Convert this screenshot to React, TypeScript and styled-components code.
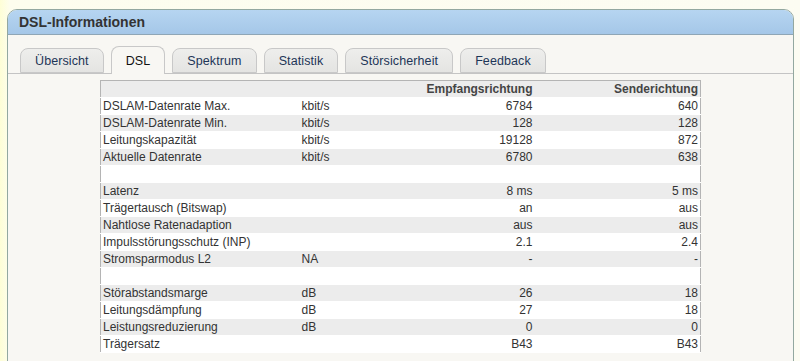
import styled, { createGlobalStyle } from "styled-components";

const GlobalStyle = createGlobalStyle`
  html, body {
    margin: 0;
    padding: 0;
    background: linear-gradient(to right, #fefed6 0px, #fdfdee 10px, #fcfcf2 100%);
    font-family: "Liberation Sans", Arial, sans-serif;
  }
`;

type Row = { label: string; unit?: string; down?: string; up?: string };

const rows: (Row | null)[] = [
  { label: "DSLAM-Datenrate Max.", unit: "kbit/s", down: "6784", up: "640" },
  { label: "DSLAM-Datenrate Min.", unit: "kbit/s", down: "128", up: "128" },
  { label: "Leitungskapazität", unit: "kbit/s", down: "19128", up: "872" },
  { label: "Aktuelle Datenrate", unit: "kbit/s", down: "6780", up: "638" },
  null,
  { label: "Latenz", down: "8 ms", up: "5 ms" },
  { label: "Trägertausch (Bitswap)", down: "an", up: "aus" },
  { label: "Nahtlose Ratenadaption", down: "aus", up: "aus" },
  { label: "Impulsstörungsschutz (INP)", down: "2.1", up: "2.4" },
  { label: "Stromsparmodus L2", unit: "NA", down: "-", up: "-" },
  null,
  { label: "Störabstandsmarge", unit: "dB", down: "26", up: "18" },
  { label: "Leitungsdämpfung", unit: "dB", down: "27", up: "18" },
  { label: "Leistungsreduzierung", unit: "dB", down: "0", up: "0" },
  { label: "Trägersatz", down: "B43", up: "B43" },
];

const tabs = ["Übersicht", "DSL", "Spektrum", "Statistik", "Störsicherheit", "Feedback"];

const Page = styled.div`
  padding: 9px 6px 0 7px;
  height: 361px;
  box-sizing: border-box;
  overflow: hidden;
`;

const Panel = styled.div`
  border: 1px solid #93a8a0;
  border-radius: 10px 10px 0 0;
  background: #f8f7f3;
  height: 400px;
  overflow: hidden;
`;

const Header = styled.div`
  height: 24px;
  background: linear-gradient(to bottom, #b6d5f1, #a5c7e8);
  border-bottom: 1px solid #8fa6b6;
  display: flex;
  align-items: center;
  padding-left: 11px;
  font-size: 14px;
  font-weight: bold;
  color: #333;
`;

const TabBar = styled.div`
  display: flex;
  align-items: flex-end;
  gap: 7px;
  margin-top: 11px;
  padding-left: 12px;
  height: 27px;
  border-bottom: 1px solid #c4c4c4;
`;

const Tab = styled.div<{ $active?: boolean }>`
  height: ${(p) => (p.$active ? "28px" : "25px")};
  margin-bottom: ${(p) => (p.$active ? "-1px" : "0")};
  padding: 0 14px;
  display: flex;
  align-items: center;
  justify-content: center;
  box-sizing: border-box;
  border: 1px solid #c8c8c8;
  border-bottom: ${(p) => (p.$active ? "none" : "1px solid #c8c8c8")};
  border-radius: 8px 8px 0 0;
  background: ${(p) =>
    p.$active ? "#f8f7f3" : "linear-gradient(to bottom, #eeeeec, #e4e4e2)"};
  font-size: 12.5px;
  letter-spacing: 0.1px;
  color: ${(p) => (p.$active ? "#111" : "#1d3557")};
  padding-top: ${(p) => (p.$active ? "0" : "1px")};
`;

const Content = styled.div`
  padding: 6px 0 0 92px;
`;

const Table = styled.table`
  width: 601px;
  border-collapse: collapse;
  border: 1px solid #b4b4b4;
  font-size: 12px;
  color: #333;
  table-layout: fixed;
`;

const Tr = styled.tr<{ $grey?: boolean }>`
  height: 17px;
  background: ${(p) => (p.$grey ? "#ececec" : "#ffffff")};
  border-bottom: 1px solid #ffffff;
`;

const Th = styled.th<{ $w?: number }>`
  box-sizing: border-box;
  width: ${(p) => (p.$w ? `${p.$w}px` : "auto")};
  text-align: right;
  font-weight: bold;
  color: #444;
  padding: 0 2px 0 3px;
  white-space: nowrap;
`;

const Td = styled.td<{ $right?: boolean }>`
  text-align: ${(p) => (p.$right ? "right" : "left")};
  padding: 0 2px 0 2px;
  white-space: nowrap;
  line-height: 16px;
`;

export default function App() {
  return (
    <Page>
      <GlobalStyle />
      <Panel>
        <Header>DSL-Informationen</Header>
        <TabBar>
          {tabs.map((t) => (
            <Tab key={t} $active={t === "DSL"}>
              {t}
            </Tab>
          ))}
        </TabBar>
        <Content>
          <Table>
            <thead>
              <Tr $grey>
                <Th $w={199} />
                <Th $w={100} />
                <Th $w={135}>Empfangsrichtung</Th>
                <Th>Senderichtung</Th>
              </Tr>
            </thead>
            <tbody>
              {rows.map((r, i) => (
                <Tr key={i} $grey={i % 2 === 1}>
                  <Td>{r ? r.label : "\u00a0"}</Td>
                  <Td>{r?.unit ?? ""}</Td>
                  <Td $right>{r?.down ?? ""}</Td>
                  <Td $right>{r?.up ?? ""}</Td>
                </Tr>
              ))}
            </tbody>
          </Table>
        </Content>
      </Panel>
    </Page>
  );
}
